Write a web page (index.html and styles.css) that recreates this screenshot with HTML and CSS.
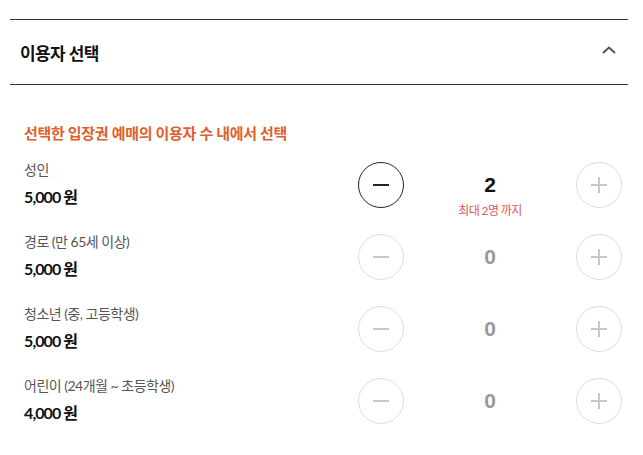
FILE: index.html
```html
<!DOCTYPE html>
<html>
<head>
	<title>이용자 선택</title>
	<link rel="stylesheet" href="styles.css">
</head>
<body>
	<div class="panel">
		<div class="panel-head">
			<h2>이용자 선택</h2>
			<svg class="chevron" width="14" height="8" viewBox="0 0 14 8">
				<path d="M1 7 L7 1.5 L13 7" fill="none" stroke="#555" stroke-width="2"/>
			</svg>
		</div>

		<div class="panel-body">
			<p class="notice">선택한 입장권 예매의 이용자 수 내에서 선택</p>

			<div class="row">
				<div class="info">
					<div class="name">성인</div>
					<div class="price">5,000 원</div>
				</div>
				<div class="counter">
					<button class="step active"><span class="minus"></span></button>
					<div class="count">
						<div class="num">2</div>
						<div class="limit">최대 2명 까지</div>
					</div>
					<button class="step"><span class="plus"></span></button>
				</div>
			</div>

			<div class="row">
				<div class="info">
					<div class="name">경로 (만 65세 이상)</div>
					<div class="price">5,000 원</div>
				</div>
				<div class="counter">
					<button class="step"><span class="minus"></span></button>
					<div class="count">
						<div class="num zero">0</div>
					</div>
					<button class="step"><span class="plus"></span></button>
				</div>
			</div>

			<div class="row">
				<div class="info">
					<div class="name">청소년 (중, 고등학생)</div>
					<div class="price">5,000 원</div>
				</div>
				<div class="counter">
					<button class="step"><span class="minus"></span></button>
					<div class="count">
						<div class="num zero">0</div>
					</div>
					<button class="step"><span class="plus"></span></button>
				</div>
			</div>

			<div class="row">
				<div class="info">
					<div class="name">어린이 (24개월 ~ 초등학생)</div>
					<div class="price">4,000 원</div>
				</div>
				<div class="counter">
					<button class="step"><span class="minus"></span></button>
					<div class="count">
						<div class="num zero">0</div>
					</div>
					<button class="step"><span class="plus"></span></button>
				</div>
			</div>
		</div>
	</div>
</body>
</html>
```

FILE: styles.css
```css
body {
	margin: 0;
	padding: 19px 15px 0 10px;
	background: #fff;
	font-family: 'Lato', 'Noto Sans CJK KR', sans-serif;
	color: #111;
}

.panel-head {
	display: flex;
	align-items: center;
	justify-content: space-between;
	height: 64px;
	border-top: 1px solid #333;
	border-bottom: 1px solid #333;
	padding: 0 12px 0 10px;
}

.panel-head h2 {
	margin: 0;
	font-size: 17px;
	font-weight: bold;
	letter-spacing: -0.6px;
	color: #111;
}

.chevron {
	display: block;
	margin-top: -4px;
}

.panel-body {
	padding: 38px 6px 0 14px;
}

.notice {
	margin: 0 0 17px;
	font-size: 15px;
	line-height: 20px;
	font-weight: bold;
	letter-spacing: -0.3px;
	color: #e0602c;
}

.row {
	display: flex;
	justify-content: space-between;
	align-items: flex-start;
	height: 72px;
}

.name {
	font-size: 14px;
	line-height: 20px;
	letter-spacing: -0.5px;
	color: #555;
}

.price {
	margin-top: 6px;
	font-size: 16px;
	line-height: 22px;
	font-weight: bold;
	letter-spacing: -0.9px;
	color: #111;
}

.counter {
	display: flex;
	align-items: flex-start;
	margin-top: 2px;
}

.step {
	position: relative;
	width: 46px;
	height: 46px;
	padding: 0;
	border: 1px solid #ddd;
	border-radius: 50%;
	background: #fff;
	cursor: pointer;
}

.step.active {
	border-color: #222;
}

.minus, .plus {
	position: absolute;
	left: 50%;
	top: 50%;
	width: 16px;
	height: 2px;
	margin: -1px 0 0 -8px;
	background: #c8c8c8;
}

.active .minus {
	background: #222;
}

.plus::after {
	content: '';
	position: absolute;
	left: 7px;
	top: -7px;
	width: 2px;
	height: 16px;
	background: #c8c8c8;
}

.count {
	width: 172px;
	text-align: center;
}

.num {
	font-family: 'Liberation Sans', 'Noto Sans CJK KR', sans-serif;
	font-size: 21px;
	font-weight: bold;
	line-height: 46px;
	color: #111;
}

.num.zero {
	color: #999;
}

.limit {
	margin-top: -5px;
	font-size: 12px;
	line-height: 16px;
	letter-spacing: -0.6px;
	color: #e05a5a;
}
```
